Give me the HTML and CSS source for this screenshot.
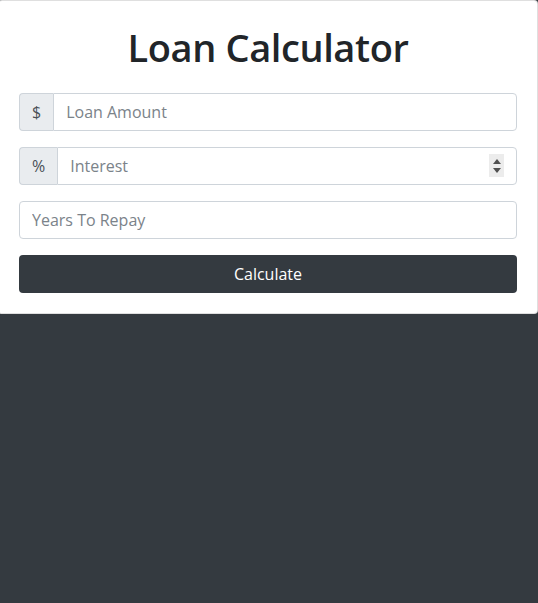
FILE: index.html
```html
<!DOCTYPE html>
<html lang="en">
<head>
    <meta charset="UTF-8">
    <meta name="viewport" content="width=device-width, initial-scale=1.0">
    <title>Loan Calculator</title>
    <link rel="stylesheet" href="styles.css">
</head>
<body>
    <div class="card">
        <div class="card-body">
            <h1 class="heading">Loan Calculator</h1>
            <form id="loan-form">
                <div class="input-group">
                    <span class="addon">$</span>
                    <input type="text" id="amount" class="form-input" placeholder="Loan Amount">
                </div>
                <div class="input-group">
                    <span class="addon">%</span>
                    <input type="text" id="interest" class="form-input" placeholder="Interest">
                    <!-- number stepper -->
                    <span class="spinner">
                        <span class="arrow arrow-up"></span>
                        <span class="arrow arrow-down"></span>
                    </span>
                </div>
                <div class="input-group">
                    <input type="text" id="years" class="form-input" placeholder="Years To Repay">
                </div>
                <button type="submit" class="btn">Calculate</button>
            </form>
        </div>
    </div>
</body>
</html>
```

FILE: styles.css
```css
:root {
    --dark: #343a40;
    --border: #ced4da;
    --addon-bg: #e9ecef;
    --muted: #7b838a;
    --text: #212529;
}
* {
    margin: 0;
    padding: 0;
    box-sizing: border-box;
}
body {
    font-family: "Open Sans", "Noto Sans", sans-serif;
    font-size: 16px;
    line-height: 1.5;
    color: var(--text);
    background-color: var(--dark);
}
.card {
    background-color: #ffffff;
    border: 1px solid rgba(0, 0, 0, 0.125);
    border-radius: 4px;
    margin-left: -2px;
}
.card-body {
    padding: 20px 20px 20px 20px;
}
.heading {
    font-size: 38px;
    font-weight: 600;
    line-height: 46px;
    padding-top: 3px;
    text-align: center;
    margin-bottom: 23px;
    letter-spacing: -0.4px;
}

/* Inputs */
.input-group {
    position: relative;
    display: flex;
    height: 38px;
    margin-bottom: 16px;
}
.addon {
    display: flex;
    align-items: center;
    padding: 0 12px;
    background-color: var(--addon-bg);
    border: 1px solid var(--border);
    border-right: none;
    border-radius: 4px 0 0 4px;
    color: #495057;
}
.form-input {
    flex: 1;
    min-width: 0;
    padding: 6px 12px;
    border: 1px solid var(--border);
    border-radius: 4px;
    font-family: inherit;
    font-size: 16px;
    color: #495057;
    outline: none;
}
.addon + .form-input {
    border-radius: 0 4px 4px 0;
}
.form-input::placeholder {
    color: var(--muted);
}
.spinner {
    position: absolute;
    right: 13px;
    top: 7px;
    width: 15px;
    height: 23px;
    background-color: #ececec;
    display: flex;
    flex-direction: column;
    justify-content: center;
    align-items: center;
    gap: 4px;
}
.arrow {
    width: 0;
    height: 0;
    border-left: 4px solid transparent;
    border-right: 4px solid transparent;
}
.arrow-up {
    border-bottom: 5px solid #505050;
}
.arrow-down {
    border-top: 5px solid #505050;
}

/* Button */
.btn {
    display: block;
    width: 100%;
    height: 38px;
    background-color: var(--dark);
    color: #ffffff;
    border: none;
    border-radius: 4px;
    font-family: inherit;
    font-size: 16px;
    cursor: pointer;
}
```
